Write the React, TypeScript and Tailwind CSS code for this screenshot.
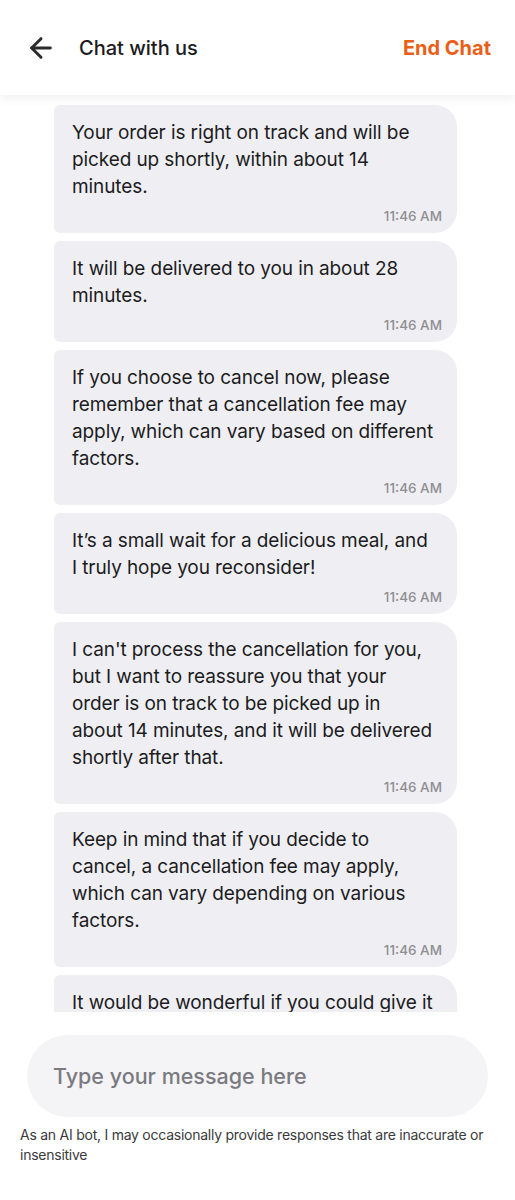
import { ArrowLeft } from "lucide-react";

const messages: string[][] = [
  ["Your order is right on track and will be", "picked up shortly, within about 14", "minutes."],
  ["It will be delivered to you in about 28", "minutes."],
  [
    "If you choose to cancel now, please",
    "remember that a cancellation fee may",
    "apply, which can vary based on different",
    "factors.",
  ],
  ["It’s a small wait for a delicious meal, and", "I truly hope you reconsider!"],
  [
    "I can't process the cancellation for you,",
    "but I want to reassure you that your",
    "order is on track to be picked up in",
    "about 14 minutes, and it will be delivered",
    "shortly after that.",
  ],
  [
    "Keep in mind that if you decide to",
    "cancel, a cancellation fee may apply,",
    "which can vary depending on various",
    "factors.",
  ],
  ["It would be wonderful if you could give it", "a little more time."],
];

const Bubble = ({ lines }: { lines: string[] }) => (
  <div className="flex flex-col bg-[#efeff3] rounded-l-[6px] rounded-r-[22px] pl-[18px] pr-[15px] pt-[14px] pb-[7px]">
    <div className="text-[19px] leading-[27px] text-[#1c1c1e] tracking-[-0.1px]">
      {lines.map((l, i) => (
        <div key={i} className="whitespace-nowrap">
          {l}
        </div>
      ))}
    </div>
    <div className="self-end mt-[6px] text-[13.5px] leading-[20px] text-[#8e8e93] font-medium">11:46 AM</div>
  </div>
);

export default function App() {
  return (
    <div className="w-[515px] h-[1200px] bg-white flex flex-col overflow-hidden font-['Inter',sans-serif]">
      <header className="relative z-10 h-[95px] shrink-0 bg-white flex items-center px-[26px] shadow-[0_4px_10px_rgba(0,0,0,0.06)]">
        <ArrowLeft size={32} strokeWidth={2.2} className="text-[#2b2b2b] -ml-[1px]" />
        <h1 className="ml-[22px] text-[20px] font-medium text-[#1c1c1e]">Chat with us</h1>
        <button className="ml-auto -mr-[2px] text-[20px] font-bold text-[#ea5f18]">End Chat</button>
      </header>
      <main className="h-[917px] shrink-0 overflow-hidden pt-[10px] pl-[54px] pr-[58px] flex flex-col gap-[8px]">
        {messages.map((m, i) => (
          <Bubble key={i} lines={m} />
        ))}
      </main>
      <div className="px-[27px] pt-[23px] pr-[27px]">
        <div className="h-[82px] rounded-full bg-[#f4f4f6] flex items-center px-[26px]">
          <input
            className="w-full bg-transparent outline-none text-[21.5px] font-medium placeholder:text-[#7a7a80]"
            placeholder="Type your message here"
          />
        </div>
      </div>
      <p className="pl-[20px] pr-[14px] mt-[8px] text-[14px] leading-[20px] tracking-[-0.25px] text-[#3a3a3c]">
        As an AI bot, I may occasionally provide responses that are inaccurate or insensitive
      </p>
    </div>
  );
}
